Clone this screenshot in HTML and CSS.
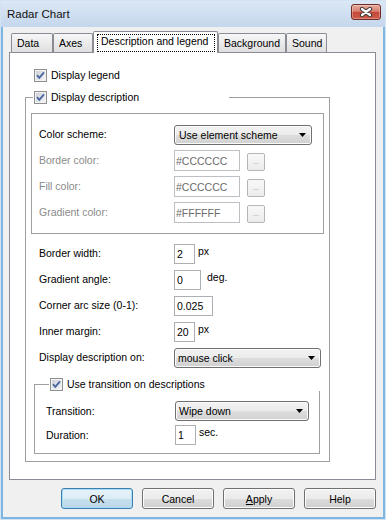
FILE: index.html
```html
<!DOCTYPE html>
<html>
<head>
<meta charset="utf-8">
<title>Radar Chart</title>
<link rel="stylesheet" href="styles.css">
</head>
<body>
<div class="window">
    <div class="titlebar">
        <span class="title">Radar Chart</span>
        <button class="close" aria-label="Close">
            <svg width="14" height="10" viewBox="0 0 14 10">
                <path d="M3 2L11 8M11 2L3 8" stroke="#3c3c3c" stroke-width="4.2" stroke-linecap="round"/>
                <path d="M3 2L11 8M11 2L3 8" stroke="#fff" stroke-width="2.2" stroke-linecap="round"/>
            </svg>
        </button>
    </div>

    <div class="client">
        <div class="tabs">
            <div class="tab tab-data">Data</div>
            <div class="tab tab-axes">Axes</div>
            <div class="tab tab-desc selected"><span class="focus">Description and legend</span></div>
            <div class="tab tab-bg">Background</div>
            <div class="tab tab-sound">Sound</div>
        </div>

        <div class="panel">
            <label class="check legend-row">
                <span class="box"><svg width="11" height="11" viewBox="0 0 11 11"><path d="M2 5.2l2.3 2.6L9 2.3" class="tick"/></svg></span>Display legend
            </label>

            <fieldset class="group desc-group">
                <legend class="desc-legend">
                    <label class="check"><span class="box"><svg width="11" height="11" viewBox="0 0 11 11"><path d="M2 5.2l2.3 2.6L9 2.3" class="tick"/></svg></span>Display description</label>
                </legend>

                <div class="form colors">
                    <span class="label">Color scheme:</span>
                    <div class="combo scheme"><span>Use element scheme</span><svg class="arrow" width="7" height="4" viewBox="0 0 7 4"><path d="M0 0h7L3.5 4z"/></svg></div>

                    <span class="label off">Border color:</span>
                    <div class="pick"><input class="field color-field" value="#CCCCCC" disabled><button class="dots" disabled>...</button></div>

                    <span class="label off">Fill color:</span>
                    <div class="pick"><input class="field color-field" value="#CCCCCC" disabled><button class="dots" disabled>...</button></div>

                    <span class="label off">Gradient color:</span>
                    <div class="pick"><input class="field color-field" value="#FFFFFF" disabled><button class="dots" disabled>...</button></div>
                </div>

                <div class="form settings">
                    <span class="label">Border width:</span>
                    <div class="unit"><input class="field w21" value="2"><span class="suffix">px</span></div>

                    <span class="label">Gradient angle:</span>
                    <div class="unit"><input class="field w27" value="0"><span class="suffix wide">deg.</span></div>

                    <span class="label">Corner arc size (0-1):</span>
                    <div class="unit"><input class="field w39" value="0.025"></div>

                    <span class="label">Inner margin:</span>
                    <div class="unit"><input class="field w21" value="20"><span class="suffix">px</span></div>

                    <span class="label">Display description on:</span>
                    <div class="combo show-on"><span>mouse click</span><svg class="arrow" width="7" height="4" viewBox="0 0 7 4"><path d="M0 0h7L3.5 4z"/></svg></div>
                </div>

                <fieldset class="group trans-group">
                    <legend class="trans-legend">
                        <label class="check"><span class="box"><svg width="11" height="11" viewBox="0 0 11 11"><path d="M2 5.2l2.3 2.6L9 2.3" class="tick"/></svg></span>Use transition on descriptions</label>
                    </legend>

                    <div class="form trans">
                        <span class="label">Transition:</span>
                        <div class="combo wipe"><span>Wipe down</span><svg class="arrow" width="7" height="4" viewBox="0 0 7 4"><path d="M0 0h7L3.5 4z"/></svg></div>

                        <span class="label">Duration:</span>
                        <div class="unit"><input class="field w21" value="1"><span class="suffix">sec.</span></div>
                    </div>
                </fieldset>
            </fieldset>
        </div>

        <div class="buttons">
            <button class="btn default">OK</button>
            <button class="btn">Cancel</button>
            <button class="btn"><u>A</u>pply</button>
            <button class="btn">Help</button>
        </div>
    </div>
</div>
</body>
</html>
```

FILE: styles.css
```css
* {
    box-sizing: border-box;
}

body {
    margin: 0;
    font: 10.5px "Liberation Sans", Arial, sans-serif;
    color: #000;
    background: #fff;
}

/* window frame */
.window {
    width: 386px;
    height: 520px;
    border: 1px solid #d4e3f2;
    background: #7db6e3;
    display: flex;
    flex-direction: column;
}

.titlebar {
    height: 26px;
    display: flex;
    align-items: flex-start;
    background: linear-gradient(#dbe7f5, #c5d7ed);
}

.title {
    margin: 7px 0 0 6px;
    font-size: 11.5px;
    line-height: 13px;
    color: #111;
}

.close {
    margin: 3px 4px 0 auto;
    width: 30px;
    height: 16px;
    padding: 0;
    border: 1px solid #6e2c25;
    border-radius: 3px;
    background: linear-gradient(#e9ab9c, #d77f70 45%, #c5493a 52%, #cd5a48);
    box-shadow: inset 0 0 0 1px rgba(255, 255, 255, 0.3);
    display: flex;
    align-items: center;
    justify-content: center;
}

.client {
    flex: 1;
    margin: 0 2px 2px;
    padding: 4px 7px 8px 6px;
    background: #f0f0f0;
    display: flex;
    flex-direction: column;
}

/* tabs */
.tabs {
    height: 21px;
    margin-left: 2px;
    display: flex;
    align-items: flex-end;
    position: relative;
    z-index: 1;
}

.tab {
    height: 19px;
    padding: 2px 0 0 5px;
    line-height: 14px;
    white-space: nowrap;
    border: 1px solid #898c95;
    border-bottom: 0;
    border-radius: 2px 2px 0 0;
    background: linear-gradient(#f7f7f7, #dfdfdf);
}

.tab-data { width: 42px; }
.tab-axes { width: 40px; }
.tab-desc { width: 125px; }
.tab-bg { width: 68px; }
.tab-sound { width: 41px; }

.tab.selected {
    height: 22px;
    margin-bottom: -1px;
    padding: 2px 2px 1px 3px;
    background: #fff;
}

.focus {
    display: block;
    height: 18px;
    padding-left: 3px;
    line-height: 13px;
    border: 1px dotted #000;
}

.panel {
    height: 428px;
    padding-top: 16px;
    background: #fff;
    border: 1px solid #898c95;
}

/* checkboxes */
.check {
    display: flex;
    align-items: center;
    width: max-content;
    height: 13px;
    line-height: 13px;
}

.box {
    width: 13px;
    height: 13px;
    margin-right: 4px;
    border: 1px solid #8e8f8f;
    background: linear-gradient(135deg, #c9ced5, #f6f6f6);
    box-shadow: inset 0 0 0 1px #f3f3f3;
    display: flex;
    align-items: center;
    justify-content: center;
}

.tick {
    fill: none;
    stroke: #4a64a2;
    stroke-width: 1.8;
}

.legend-row {
    margin-left: 24px;
}

/* group boxes */
.group {
    margin: 0;
    padding: 0;
    min-width: 0;
    border: 1px solid #a0a0a0;
}

.group legend {
    padding: 0 0 0 1px;
}

.desc-group {
    width: 305px;
    margin: 9px 0 0 15px;
    padding-bottom: 7px;
}

.desc-legend {
    width: 196px;
    margin-left: 7px;
}

.trans-group {
    width: 286px;
    margin: 10px 0 0 8px;
    padding: 10px 0 8px 11px;
}

.trans-legend {
    width: 275px;
    margin-left: 3px;
}

/* label / control grids */
.form {
    display: grid;
    grid-template-columns: 135px auto;
    grid-auto-rows: 21px;
    row-gap: 5px;
    align-items: center;
    justify-items: start;
}

.colors {
    margin: 9px 5px 0;
    padding: 10px 0 10px 7px;
    border: 1px solid #a0a0a0;
}

.settings {
    margin: 9px 0 0 13px;
}

.trans {
    grid-template-columns: 129px auto;
    grid-auto-rows: 20px;
    row-gap: 4px;
}

.label {
    line-height: 13px;
    white-space: nowrap;
}

.label.off {
    color: #8a8a8a;
}

/* inputs */
.field {
    height: 20px;
    margin: 0;
    padding: 0 2px;
    font: inherit;
    color: #000;
    background: #fff;
    border: 1px solid #acb0b5;
    outline: none;
}

.color-field {
    width: 66px;
    height: 21px;
    padding-left: 1px;
    color: #6b6b6b;
    border-color: #bcc0c4;
}

.w21 { width: 21px; }
.w27 { width: 27px; }
.w39 { width: 39px; }

.pick {
    display: flex;
    align-items: flex-end;
}

.dots {
    width: 18px;
    height: 18px;
    margin: 0 0 0 7px;
    padding: 0 0 2px;
    font: 7px "Liberation Sans", Arial, sans-serif;
    color: #8d8d8d;
    border: 1px solid #b3b5b8;
    border-radius: 2px;
    background: linear-gradient(#f8f8f8, #ececec);
    display: flex;
    align-items: center;
    justify-content: center;
}

.unit {
    display: flex;
    align-items: flex-start;
}

.suffix {
    margin: 1px 0 0 3px;
    line-height: 13px;
}

.suffix.wide {
    margin-left: 6px;
}

/* drop-down lists */
.combo {
    height: 20px;
    padding: 0 5px 0 3px;
    border: 1px solid #707070;
    border-radius: 3px;
    background: linear-gradient(#f3f3f3, #ebebeb 50%, #dedede 50%, #d0d0d0);
    box-shadow: inset 0 0 0 1px #fbfbfb;
    display: flex;
    align-items: center;
    justify-content: space-between;
    white-space: nowrap;
}

.scheme { width: 138px; padding-left: 4px; }
.show-on { width: 147px; }
.wipe { width: 134px; }

.arrow path {
    fill: #000;
}

/* dialog buttons */
.buttons {
    margin-top: 8px;
    display: flex;
    justify-content: flex-end;
    gap: 9px;
}

.btn {
    width: 72px;
    height: 21px;
    padding: 0;
    font: inherit;
    color: #000;
    border: 1px solid #707070;
    border-radius: 3px;
    background: linear-gradient(#f2f2f2, #ebebeb 50%, #dddddd 50%, #cfcfcf);
    box-shadow: inset 0 0 0 1px #fcfcfc;
}

.btn.default {
    border-color: #3c7fb1;
    background: linear-gradient(#e8f3fa, #dcecf6 50%, #c8e0ee 50%, #bcd7e8);
    box-shadow: inset 0 0 0 1px #a6dcf4;
}
```
